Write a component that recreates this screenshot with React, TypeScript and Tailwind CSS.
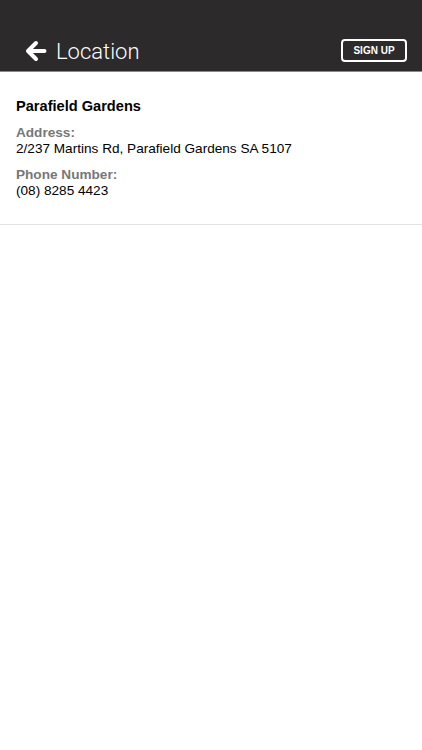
import React from 'react';

const BackArrow = () => (
  <svg width="22" height="22" viewBox="0 0 22 22" fill="none">
    <path d="M19.5 11H5M11 3L3 11l8 8" stroke="white" strokeWidth="4" strokeLinecap="round" strokeLinejoin="round" />
  </svg>
);

export default function App() {
  return (
    <div className="min-h-[750px] bg-white" style={{ fontFamily: '"Liberation Sans", Arial, sans-serif' }}>
      <header className="h-[72px] bg-[#2c2a2b] border-b border-[#8a8a8a] flex flex-col justify-end">
        <div className="h-[23px] mb-[9px] flex items-center justify-between pl-[25px] pr-[15px]">
          <div className="flex items-center gap-[9px]">
            <BackArrow />
            <h1
              className="text-white text-[22px] font-light leading-[23px] pt-[1px]"
              style={{ fontFamily: 'Roboto, "Liberation Sans", sans-serif' }}
            >
              Location
            </h1>
          </div>
          <button className="w-[66px] h-[23px] border-2 border-white rounded-[4px] text-white text-[10px] font-bold leading-none flex items-center justify-center">
            SIGN UP
          </button>
        </div>
      </header>

      <section className="px-4 pt-[25px] pb-[25px] border-b border-[#e3e3e3]">
        <h2 className="text-[14.6px] font-bold text-black leading-[18px]">Parafield Gardens</h2>
        <div className="mt-[10px]">
          <div className="text-[13.6px] font-bold text-[#777] leading-[16px]">Address:</div>
          <div className="text-[13.6px] text-black leading-[16px]">2/237 Martins Rd, Parafield Gardens SA 5107</div>
        </div>
        <div className="mt-[10px]">
          <div className="text-[13.6px] font-bold text-[#777] leading-[16px]">Phone Number:</div>
          <div className="text-[13.6px] text-black leading-[16px]">(08) 8285 4423</div>
        </div>
      </section>
    </div>
  );
}
